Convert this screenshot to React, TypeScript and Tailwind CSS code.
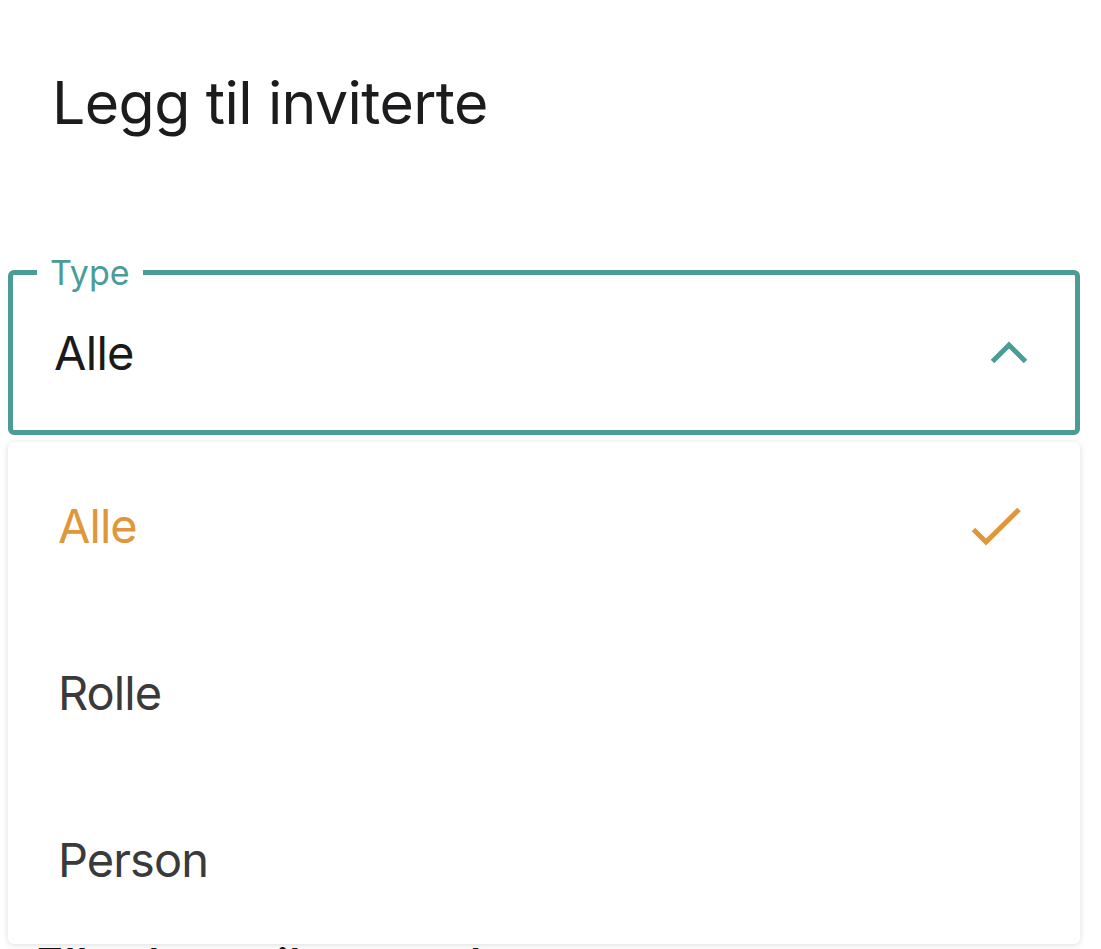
import { X } from "lucide-react";

const TEAL = "#4b9c97";

const OPTIONS = ["Alle", "Rolle", "Person"];

function ChevronUp() {
  return (
    <svg width="40" height="24" viewBox="0 0 40 24" fill="none">
      <path
        d="M3.5 20.5 L20 4 L36.5 20.5"
        stroke={TEAL}
        strokeWidth="5"
        strokeLinejoin="miter"
      />
    </svg>
  );
}

function Check() {
  return (
    <svg width="56" height="44" viewBox="0 0 56 44" fill="none">
      <path
        d="M5.5 25.5 L18 38 L51 5.5"
        stroke="#e0973b"
        strokeWidth="5"
        strokeLinejoin="miter"
      />
    </svg>
  );
}

export default function App() {
  const selected = "Alle";

  return (
    <div className="relative h-[949px] w-[1101px] overflow-hidden bg-white font-['Inter','Noto_Sans',sans-serif]">
      {/* Title */}
      <h1 className="pl-[52px] pt-[67px] text-[59px] leading-[72px] font-normal tracking-[-0.01em] text-[#1c1c1e]">
        Legg til inviterte
      </h1>

      {/* Type select */}
      <div className="relative ml-[8px] mt-[131px] w-[1072px]">
        <div className="flex h-[165px] items-center justify-between rounded-[6px] border-[5px] border-[#4b9c97] pl-[41px] pr-[46px]">
          <span className="text-[47px] leading-none tracking-[-0.015em] text-[#1a1a1a]">
            Alle
          </span>
          <ChevronUp />
        </div>
        <span className="absolute left-[29px] top-[-14px] bg-white px-[13px] text-[34px] leading-none text-[#4b9c97]">
          Type
        </span>

        {/* Open menu */}
        <div className="absolute left-0 right-0 top-[172px] z-10 h-[502px] rounded-[6px] bg-white shadow-[0_1px_6px_rgba(0,0,0,0.14)]">
          {OPTIONS.map((opt) => {
            const active = opt === selected;
            return (
              <div
                key={opt}
                className="flex h-[167px] items-center justify-between pl-[50px] pr-[56px]"
              >
                <span
                  className={`text-[47px] leading-none tracking-[-0.02em] ${active ? "text-[#e0973b]" : "text-[#3a3a3a]"}`}
                >
                  {opt}
                </span>
                {active && <Check />}
              </div>
            );
          })}
        </div>
      </div>

      {/* Content behind the menu */}
      <div className="mt-[502px] flex items-center justify-between pl-[35px] pr-[88px]">
        <span className="text-[48px] leading-[58px] font-medium text-[#111]">
          Eller legg til manuelt
        </span>
        <X size={30} strokeWidth={3} color="#111" />
      </div>
    </div>
  );
}
